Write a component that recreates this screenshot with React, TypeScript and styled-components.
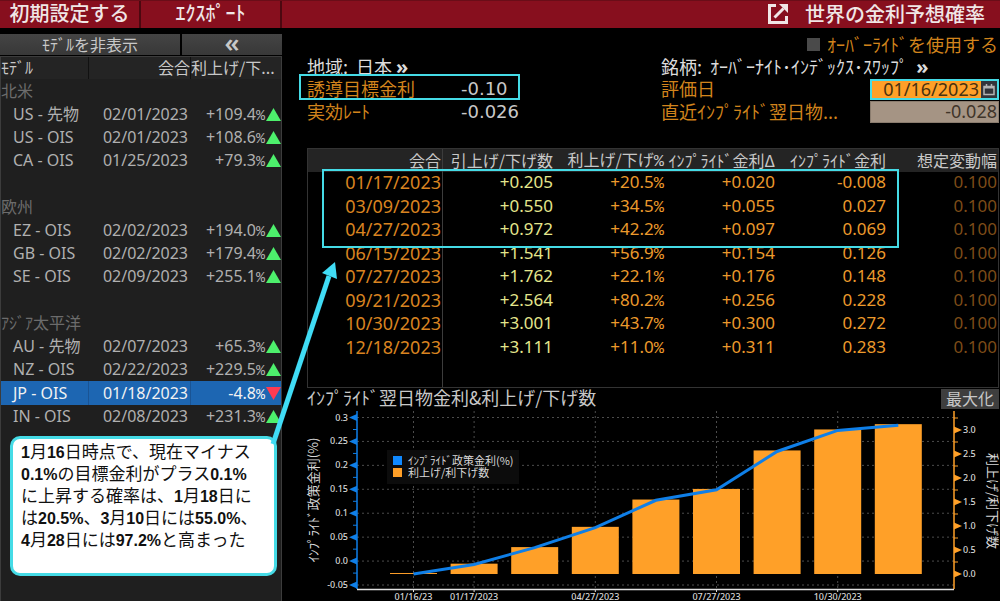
import React from "react";
import styled, { createGlobalStyle, css } from "styled-components";

const color = {
  cyan: "#45dbe6",
  arrow: "#40dcf5",
  red: "#870f1e",
  label: "#d2841c",
  bar: "#ffa028",
  line: "#0f7fe8",
  text: "#c8c8c8",
};

const latin = `"Noto Sans", "Noto Sans CJK JP", sans-serif`;
const cjk = `"Noto Sans CJK JP", "Noto Sans", sans-serif`;

const GlobalStyle = createGlobalStyle`
  *, *::before, *::after { box-sizing: border-box; }
  body { margin: 0; background: #000; color: ${color.text}; font-family: ${latin}; font-size: 16px; }
  button, input { font: inherit; color: inherit; border: 0; padding: 0; margin: 0; border-radius: 0; }
  table { border-collapse: separate; border-spacing: 0; table-layout: fixed; width: 100%; }
  th, td { padding: 0; font-weight: 400; white-space: nowrap; overflow: hidden; }
`;

const Page = styled.div`
  position: relative;
  min-height: 100vh;
  display: flex;
  flex-direction: column;
`;

/* Title bar */

const TopBar = styled.header`
  display: flex;
  height: 28px;
  background: ${color.red};
  border-top: 1px solid #6a0d18;
  color: #f0e6e6;
  font-family: ${cjk};
  font-size: 20px;
  line-height: 24px;
`;

const TopButton = styled.button`
  width: 141px;
  background: transparent;
  border-right: 2px solid #4c0810;
  padding-bottom: 3px;
  font-weight: 500;
  line-height: 24px;
`;

const TopTitle = styled.div`
  margin-left: auto;
  display: flex;
  align-items: center;
  gap: 17px;
  padding: 0 15px 2px 0;
`;

const Title = styled.h1`
  margin: 0;
  font-size: 20px;
  line-height: 24px;
  font-weight: 500;
`;

/* Body */

const Body = styled.div`
  flex: 1;
  display: flex;
  padding-top: 6px;
`;

const Sidebar = styled.aside`
  flex: 0 0 283px;
  display: flex;
  flex-direction: column;
  padding-right: 1px;
`;

const SideButtons = styled.div`
  display: flex;
  height: 21px;
  gap: 2px;
  margin-bottom: 1px;
`;

const SideButton = styled.button<{ $grow?: boolean }>`
  ${(p) => (p.$grow ? "flex: 1;" : "flex: 0 0 100px;")}
  background: linear-gradient(#444, #383838);
  font-family: ${cjk};
  font-size: 16px;
  line-height: 18px;
  padding-bottom: 2px;
`;

const Chevrons = styled.span`
  display: block;
  font-family: ${latin};
  font-size: 26px;
  font-weight: 600;
  line-height: 14px;
  padding-bottom: 4px;
`;

const SidePanel = styled.div`
  flex: 1;
  background: #1f1f1f;
  border: 1px solid #3c3c3c;
  border-width: 1px 1px 0;
`;

const SideHeadRow = styled.tr`
  height: 22px;
  background: #242424;
  font-family: ${cjk};
  line-height: 20px;
  th { padding-bottom: 2px; }
  th + th { border-left: 1px solid #111; }
`;

const SideCell = styled.td<{ $align?: string; $indent?: boolean }>`
  text-align: ${(p) => p.$align || "left"};
  padding-left: ${(p) => (p.$indent ? "12px" : "0")};
`;

const SideRow = styled.tr<{ $selected?: boolean }>`
  height: 23px;
  line-height: 21px;
  color: #b0b0b0;
  td:nth-child(2) { padding-right: 2px; }
  ${(p) =>
    p.$selected &&
    css`
      height: 24px;
      background: #1d66b2;
      color: #f2f2f2;
      td + td { border-left: 1px solid #1a5494; }
    `}
`;

const GroupRow = styled.tr`
  height: 24px;
  line-height: 20px;
  color: #6c6c6c;
  font-family: ${cjk};
  td { padding-bottom: 2px; }
`;

const PercentSign = styled.span<{ $large?: boolean }>`
  font-family: "Liberation Mono", monospace;
  font-size: ${(p) => (p.$large ? "17px" : "15px")};
  line-height: 1;
`;

const TrendIcon = styled.svg`
  width: 15px;
  height: 14px;
  margin-left: 1px;
  vertical-align: -1px;
`;

const Callout = styled.p`
  margin: 8px 4px 0 9px;
  height: 140px;
  padding: 1px 8px;
  background: #fff;
  border: 3px solid ${color.cyan};
  border-radius: 10px;
  color: #111;
  font-family: ${cjk};
  font-size: 17px;
  line-height: 22px;
  white-space: nowrap;
  b {
    font-family: "Liberation Sans", sans-serif;
    font-size: 16px;
    line-height: 1;
  }
`;

const Arrow = styled.svg`
  position: absolute;
  left: 266px;
  top: 258px;
  width: 76px;
  height: 190px;
  pointer-events: none;
`;

/* Main column */

const Main = styled.main`
  flex: 1;
  min-width: 0;
  padding-right: 1px;
`;

const OverrideLabel = styled.label`
  display: flex;
  justify-content: flex-end;
  align-items: center;
  gap: 7px;
  height: 22px;
  padding: 0 1px 2px 0;
  color: ${color.label};
  font-family: ${cjk};
  font-size: 18px;
  line-height: 20px;
`;

const Checkbox = styled.input`
  appearance: none;
  width: 13px;
  height: 13px;
  background: #4a4a4a;
`;

const Info = styled.div`
  display: flex;
  padding-left: 24px;
  font-family: ${cjk};
  font-size: 18px;
  line-height: 20px;
  white-space: nowrap;
`;

const InfoColumn = styled.div<{ $fixed?: boolean }>`
  ${(p) => (p.$fixed ? "flex: 0 0 338px;" : "flex: 1;")}
`;

const InfoRow = styled.div<{ $marked?: boolean }>`
  display: flex;
  align-items: center;
  height: 22px;
  color: ${color.label};
  position: relative;
  & + & + & { height: 24px; }
  ${(p) =>
    p.$marked &&
    css`
      &::after {
        content: "";
        position: absolute;
        left: -8px;
        top: -4px;
        width: 221px;
        height: 26px;
        border: 2px solid ${color.cyan};
      }
    `}
`;

const InfoHeading = styled.a`
  color: #dcdcdc;
  text-decoration: none;
  white-space: pre;
  padding-bottom: 2px;
  b { font-family: ${latin}; font-size: 20px; line-height: 1; }
`;

const InfoLabel = styled.label`
  flex: 1;
  padding-bottom: 2px;
`;

const InfoName = styled.span`
  width: 154px;
  padding-bottom: 2px;
`;

const InfoValue = styled.span`
  color: ${color.text};
  font-family: "DejaVu Sans", sans-serif;
`;

const DateField = styled.div`
  display: flex;
  width: 129px;
  height: 21px;
  border: 2px solid ${color.cyan};
  background: ${color.bar};
`;

const DateInput = styled.input`
  flex: 1;
  min-width: 0;
  background: transparent;
  color: #4a3210;
  font-family: ${latin};
  text-align: right;
  padding-right: 2px;
`;

const CalendarButton = styled.button`
  display: flex;
  align-items: center;
  justify-content: center;
  width: 16px;
  background: #33343a;
`;

const RateInput = styled.input`
  width: 129px;
  height: 22px;
  background: #a59484;
  border: 1px solid #8a7c6e;
  color: #40352a;
  font-family: ${latin};
  text-align: right;
  padding: 0 1px 2px 0;
`;

/* Rate table */

const TableFrame = styled.div`
  position: relative;
  margin: 24px 0 0 24px;
  border: 1px solid #333;
`;

const HeadRow = styled.tr`
  height: 22px;
  background: #242424;
  font-family: ${cjk};
  line-height: 20px;
`;

const cellTone = {
  date: "#d98420",
  hikes: "#e4e68c",
  value: "#ec9a2c",
  dim: "#7d4c18",
};

const HeadCell = styled.th`
  text-align: right;
  padding: 0 1px 2px 0;
  &:first-child { border-right: 1px solid #3c3c3c; }
`;

const Cell = styled.td<{ $tone: keyof typeof cellTone }>`
  text-align: right;
  padding: 0 1px 3px 0;
  color: ${(p) => cellTone[p.$tone]};
  font-size: ${(p) => (p.$tone === "date" ? "18px" : "17px")};
  line-height: 20px;
  &:first-child { border-right: 1px solid #3c3c3c; }
`;

const Row = styled.tr`
  height: 23px;
  &:nth-child(even) { height: 24px; }
`;

const FillerRow = styled.tr`
  height: 27px;
`;

const Highlight = styled.div`
  position: absolute;
  left: 14px;
  right: 99px;
  top: 20px;
  height: 79px;
  border: 2px solid ${color.cyan};
`;

/* Chart */

const ChartHead = styled.div`
  display: flex;
  justify-content: space-between;
  align-items: flex-end;
  height: 22px;
  padding: 0 0 1px 24px;
`;

const ChartTitle = styled.h2`
  margin: 0;
  font-family: ${cjk};
  font-size: 18px;
  font-weight: 400;
  line-height: 20px;
  padding-bottom: 2px;
`;

const MaxButton = styled.button`
  width: 58px;
  height: 20px;
  background: #3e3e3e;
  font-family: ${cjk};
  line-height: 16px;
  padding-bottom: 3px;
`;

const Chart = styled.svg`
  display: block;
  width: 100%;
  height: auto;
  font-family: ${latin};
  font-size: 9px;
  fill: #d8d8d8;
  .tick { font-weight: 500; }
  .axis { font-family: ${cjk}; font-size: 13px; }
  .legend { font-family: ${cjk}; font-size: 11px; }
`;

type Model = { name: string; date: string; change: string; down?: boolean; selected?: boolean };

const groups: { title: string; models: Model[] }[] = [
  {
    title: "北米",
    models: [
      { name: "US - 先物", date: "02/01/2023", change: "+109.4" },
      { name: "US - OIS", date: "02/01/2023", change: "+108.6" },
      { name: "CA - OIS", date: "01/25/2023", change: "+79.3" },
    ],
  },
  {
    title: "欧州",
    models: [
      { name: "EZ - OIS", date: "02/02/2023", change: "+194.0" },
      { name: "GB - OIS", date: "02/02/2023", change: "+179.4" },
      { name: "SE - OIS", date: "02/09/2023", change: "+255.1" },
    ],
  },
  {
    title: "ｱｼﾞｱ太平洋",
    models: [
      { name: "AU - 先物", date: "02/07/2023", change: "+65.3" },
      { name: "NZ - OIS", date: "02/22/2023", change: "+229.5" },
      { name: "JP - OIS", date: "01/18/2023", change: "-4.8", down: true, selected: true },
      { name: "IN - OIS", date: "02/08/2023", change: "+231.3" },
    ],
  },
];

const meetings = [
  ["01/17/2023", "+0.205", "+20.5", "+0.020", "-0.008"],
  ["03/09/2023", "+0.550", "+34.5", "+0.055", "0.027"],
  ["04/27/2023", "+0.972", "+42.2", "+0.097", "0.069"],
  ["06/15/2023", "+1.541", "+56.9", "+0.154", "0.126"],
  ["07/27/2023", "+1.762", "+22.1", "+0.176", "0.148"],
  ["09/21/2023", "+2.564", "+80.2", "+0.256", "0.228"],
  ["10/30/2023", "+3.001", "+43.7", "+0.300", "0.272"],
  ["12/18/2023", "+3.111", "+11.0", "+0.311", "0.283"],
];

const points = [
  { hikes: 0.01, rate: -0.028, label: "01/16/23" },
  { hikes: 0.205, rate: -0.008, label: "01/17/2023" },
  { hikes: 0.55, rate: 0.027 },
  { hikes: 0.972, rate: 0.069, label: "04/27/2023" },
  { hikes: 1.541, rate: 0.126 },
  { hikes: 1.762, rate: 0.148, label: "07/27/2023" },
  { hikes: 2.564, rate: 0.228 },
  { hikes: 3.001, rate: 0.272, label: "10/30/2023" },
  { hikes: 3.111, rate: 0.283 },
];

const plot = { left: 74, right: 671, top: 1, bottom: 179 };
const xAt = (i: number) => 130.5 + i * 60.6;
const rateY = (v: number) => 7.5 + (0.3 - v) * 478.6;
const hikeY = (v: number) => 164 - v * 48;
const rateTicks = ["0.3", "0.25", "0.2", "0.15", "0.1", "0.05", "0.0", "-0.05"];
const hikeTicks = ["3.0", "2.5", "2.0", "1.5", "1.0", "0.5", "0.0"];

function Trend({ down }: { down?: boolean }) {
  return (
    <TrendIcon viewBox="0 0 15 14" aria-hidden>
      {down ? <path d="M0 1h15l-7.5 13z" fill="#ff3b52" /> : <path d="M0 14h15l-7.5 -13z" fill="#4df06c" />}
    </TrendIcon>
  );
}

function ModelTable() {
  return (
    <table>
      <colgroup>
        <col width="87" />
        <col width="102" />
        <col />
      </colgroup>
      <thead>
        <SideHeadRow>
          <SideCell as="th">ﾓﾃﾞﾙ</SideCell>
          <SideCell as="th" $align="right">会合</SideCell>
          <SideCell as="th">利上げ/下...</SideCell>
        </SideHeadRow>
      </thead>
      <tbody>
        {groups.map((g, gi) => (
          <React.Fragment key={g.title}>
            {gi > 0 && (
              <SideRow aria-hidden>
                <td colSpan={3} />
              </SideRow>
            )}
            <GroupRow>
              <td colSpan={3}>{g.title}</td>
            </GroupRow>
            {g.models.map((m) => (
              <SideRow key={m.name} $selected={m.selected}>
                <SideCell $indent>{m.name}</SideCell>
                <SideCell $align="right">{m.date}</SideCell>
                <SideCell $align="right">
                  {m.change}
                  <PercentSign>%</PercentSign>
                  <Trend down={m.down} />
                </SideCell>
              </SideRow>
            ))}
          </React.Fragment>
        ))}
      </tbody>
    </table>
  );
}

function RateTable() {
  return (
    <TableFrame>
      <table>
        <colgroup>
          <col width="135" />
          <col span={5} />
        </colgroup>
        <thead>
          <HeadRow>
            {["会合", "引上げ/下げ数", "利上げ/下げ%", "ｲﾝﾌﾟﾗｲﾄﾞ金利Δ", "ｲﾝﾌﾟﾗｲﾄﾞ金利", "想定変動幅"].map((h) => (
              <HeadCell key={h}>
                {h.replace("%", "")}
                {h.endsWith("%") && <PercentSign $large>%</PercentSign>}
              </HeadCell>
            ))}
          </HeadRow>
        </thead>
        <tbody>
          {meetings.map(([date, hikes, pct, delta, rate]) => (
            <Row key={date}>
              <Cell $tone="date">{date}</Cell>
              <Cell $tone="hikes">{hikes}</Cell>
              <Cell $tone="value">
                {pct}
                <PercentSign $large>%</PercentSign>
              </Cell>
              <Cell $tone="value">{delta}</Cell>
              <Cell $tone="value">{rate}</Cell>
              <Cell $tone="dim">0.100</Cell>
            </Row>
          ))}
          <FillerRow aria-hidden>
            <Cell $tone="date" />
            <Cell $tone="date" colSpan={5} />
          </FillerRow>
        </tbody>
      </table>
      <Highlight />
    </TableFrame>
  );
}

function RateChart() {
  return (
    <Chart viewBox="0 0 716 192" role="img" aria-label="ｲﾝﾌﾟﾗｲﾄﾞ翌日物金利&利上げ/下げ数">
      <g stroke="#4c4c4c" strokeDasharray="2 3">
        {rateTicks.map((t) => (
          <line key={t} x1={plot.left} x2={plot.right} y1={rateY(+t)} y2={rateY(+t)} />
        ))}
        {points.map((p, i) => p.label && <line key={i} x1={xAt(i)} x2={xAt(i)} y1={plot.top} y2={plot.bottom} />)}
      </g>
      {points.map((p, i) => (
        <rect key={i} x={xAt(i) - 23.5} width={47} y={hikeY(p.hikes) - 0.5} height={hikeY(0) - hikeY(p.hikes) + 0.5} fill={color.bar} />
      ))}
      <polyline
        points={points.map((p, i) => `${xAt(i)},${rateY(p.rate) - 0.5}`).join(" ")}
        fill="none"
        stroke={color.line}
        strokeWidth="3"
      />

      <path d={`M${plot.left} ${plot.top}V${plot.bottom}`} stroke={color.line} strokeWidth="1.5" />
      {rateTicks.map((t, i) => (
        <g key={t}>
          <path d={`M${plot.left} ${rateY(+t) - 3.5}v7l-8 -3.5z`} fill={color.line} />
          {i < 7 && <path d={`M${plot.left - 4} ${rateY(+t) + 12}h4`} stroke={color.line} />}
          <text className="tick" x="65" y={rateY(+t) + 3} textAnchor="end">{t}</text>
        </g>
      ))}

      <path d={`M${plot.right} ${plot.top}V${plot.bottom}`} stroke={color.bar} strokeWidth="1.5" />
      {hikeTicks.map((t) => (
        <g key={t}>
          <path d={`M${plot.right} ${hikeY(+t) - 3.5}v7l8 -3.5z`} fill={color.bar} />
          <path d={`M${plot.right} ${hikeY(+t) - 12}h4`} stroke={color.bar} />
          <text className="tick" x="680" y={hikeY(+t) + 3}>{t}</text>
        </g>
      ))}

      <path d={`M${plot.left} ${plot.bottom + 0.5}H${plot.right}`} stroke="#e0e0e0" strokeWidth="1.5" />
      {points.map(
        (p, i) =>
          p.label && (
            <g key={i}>
              <path d={`M${xAt(i)} ${plot.bottom}v3`} stroke="#e0e0e0" />
              <text className="tick" x={xAt(i)} y="190" textAnchor="middle">{p.label}</text>
            </g>
          )
      )}

      <text className="axis" textAnchor="middle" transform="translate(35 90) rotate(-90)">
        ｲﾝﾌﾟﾗｲﾄﾞ政策金利(%)
      </text>
      <text className="axis" textAnchor="middle" transform="translate(705 91) rotate(90)">
        利上げ/利下げ数
      </text>

      <rect x="104" y="40" width="132" height="34" fill="#0c0c0c" />
      <rect x="110" y="46" width="9" height="9" fill="#1089ff" />
      <rect x="110" y="58" width="9" height="9" fill={color.bar} />
      <text className="legend" x="125" y="55">ｲﾝﾌﾟﾗｲﾄﾞ政策金利(%)</text>
      <text className="legend" x="125" y="67">利上げ/利下げ数</text>
    </Chart>
  );
}

export default function App() {
  return (
    <Page>
      <GlobalStyle />
      <TopBar>
        <TopButton>初期設定する</TopButton>
        <TopButton>ｴｸｽﾎﾟｰﾄ</TopButton>
        <TopTitle>
          <svg width="20" height="20" viewBox="0 0 20 20" fill="none" stroke="#f0e6e6" strokeWidth="3" aria-hidden>
            <path d="M8 1.5H1.5V18.5H18.5V12" />
            <path d="M6.5 13.5L15.5 4.5" />
            <path d="M11 0H20V9z" fill="#f0e6e6" stroke="none" />
          </svg>
          <Title>世界の金利予想確率</Title>
        </TopTitle>
      </TopBar>

      <Body>
        <Sidebar>
          <SideButtons>
            <SideButton $grow>ﾓﾃﾞﾙを非表示</SideButton>
            <SideButton aria-label="折りたたむ">
              <Chevrons>«</Chevrons>
            </SideButton>
          </SideButtons>
          <SidePanel>
            <ModelTable />
            <Callout>
              <b>1</b>月<b>16</b>日時点で、現在マイナス
              <br />
              <b>0.1%</b>の目標金利がプラス<b>0.1%</b>
              <br />
              に上昇する確率は、<b>1</b>月<b>18</b>日に
              <br />
              は<b>20.5%</b>、<b>3</b>月<b>10</b>日には<b>55.0%</b>、
              <br />
              <b>4</b>月<b>28</b>日には<b>97.2%</b>と高まった
            </Callout>
          </SidePanel>
        </Sidebar>

        <Main>
          <OverrideLabel>
            <Checkbox type="checkbox" />
            ｵｰﾊﾞｰﾗｲﾄﾞを使用する
          </OverrideLabel>
          <Info>
            <InfoColumn>
              <InfoRow>
                <InfoHeading href="#region">地域:  日本 <b>»</b></InfoHeading>
              </InfoRow>
              <InfoRow $marked>
                <InfoName>誘導目標金利</InfoName>
                <InfoValue>-0.10</InfoValue>
              </InfoRow>
              <InfoRow>
                <InfoName>実効ﾚｰﾄ</InfoName>
                <InfoValue>-0.026</InfoValue>
              </InfoRow>
            </InfoColumn>
            <InfoColumn $fixed>
              <InfoRow>
                <InfoHeading href="#instrument">銘柄:  ｵｰﾊﾞｰﾅｲﾄ･ｲﾝﾃﾞｯｸｽ･ｽﾜｯﾌﾟ  <b>»</b></InfoHeading>
              </InfoRow>
              <InfoRow>
                <InfoLabel htmlFor="valuation">評価日</InfoLabel>
                <DateField>
                  <DateInput id="valuation" defaultValue="01/16/2023" />
                  <CalendarButton aria-label="カレンダー">
                    <svg width="12" height="13" viewBox="0 0 12 13" fill="none" stroke="#b4b4b4" aria-hidden>
                      <path d="M1 3.5h10v8H1z" strokeWidth="1.5" />
                      <path d="M1 4.5h10" strokeWidth="2" />
                      <path d="M3.5 1v3M8.5 1v3" strokeWidth="1.5" />
                    </svg>
                  </CalendarButton>
                </DateField>
              </InfoRow>
              <InfoRow>
                <InfoLabel htmlFor="implied">直近ｲﾝﾌﾟﾗｲﾄﾞ翌日物...</InfoLabel>
                <RateInput id="implied" defaultValue="-0.028" />
              </InfoRow>
            </InfoColumn>
          </Info>

          <RateTable />

          <ChartHead>
            <ChartTitle>ｲﾝﾌﾟﾗｲﾄﾞ翌日物金利&amp;利上げ/下げ数</ChartTitle>
            <MaxButton>最大化</MaxButton>
          </ChartHead>
          <RateChart />
        </Main>
      </Body>

      <Arrow viewBox="0 0 76 190" aria-hidden>
        <path d="M7 186L63 18" stroke={color.arrow} strokeWidth="5" />
        <path d="M69 4L56 15L71 21z" fill={color.arrow} />
      </Arrow>
    </Page>
  );
}
